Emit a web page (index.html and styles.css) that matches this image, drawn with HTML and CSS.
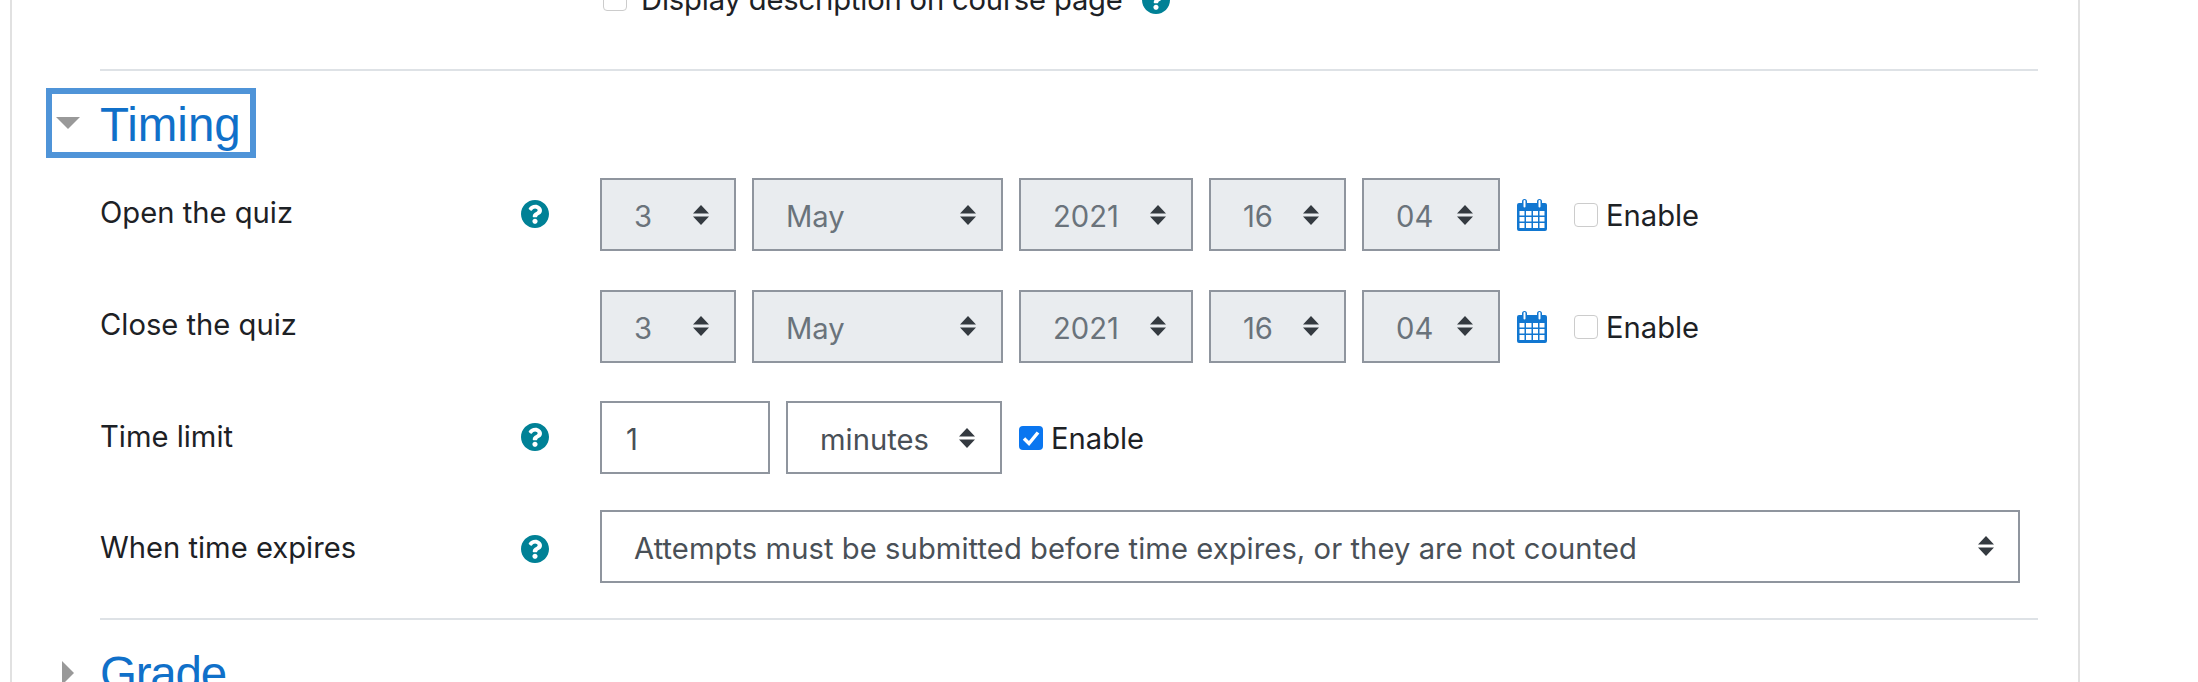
FILE: index.html
```html
<!DOCTYPE html>
<html lang="en">
<head>
    <meta charset="UTF-8">
    <title>Quiz settings</title>
    <link rel="stylesheet" href="styles.css">
</head>
<body>
    <svg class="icon-defs" width="0" height="0">
        <symbol id="help" viewBox="8 8 496 496">
            <path d="M504 256c0 136.997-111.043 248-248 248S8 392.997 8 256C8 119.083 119.043 8 256 8s248 111.083 248 248zM262.655 90c-54.497 0-89.255 22.957-116.549 63.758-3.536 5.286-2.353 12.415 2.715 16.258l34.699 26.31c5.205 3.947 12.621 3.008 16.665-2.122 17.864-22.658 30.113-35.797 57.303-35.797 20.429 0 45.698 13.148 45.698 32.958 0 14.976-12.363 22.667-32.534 33.976C247.128 238.528 216 254.941 216 296v4c0 6.627 5.373 12 12 12h56c6.627 0 12-5.373 12-12v-1.333c0-28.462 83.186-29.647 83.186-106.667 0-58.002-60.165-102-116.531-102zM256 338c-25.365 0-46 20.635-46 46 0 25.364 20.635 46 46 46s46-20.636 46-46c0-25.365-20.635-46-46-46z"/>
        </symbol>
        <symbol id="calendar" viewBox="0 0 30 33">
            <path fill-rule="evenodd" d="M5 3.5a2.5 2.5 0 0 1 5 0V5h10V3.500a2.500 2.500 0 0 1 5 0V5h3a2 2 0 0 1 2 2v24a2 2 0 0 1-2 2H2a2 2 0 0 1-2-2V7a2 2 0 0 1 2-2h3zM6.500 3v5.500a1 1 0 0 0 2 0V3a1 1 0 0 0-2 0zM21.500 3v5.500a1 1 0 0 0 2 0V3a1 1 0 0 0-2 0zM2.500 13v4.500h5V13zM9 13v4.500h5.500V13zM16 13v4.500h5V13zM22.500 13v4.500h5V13zM2.500 19v4.500h5V19zM9 19v4.500h5.500V19zM16 19v4.500h5V19zM22.500 19v4.500h5V19zM2.500 25v5h5v-5zM9 25v5h5.500v-5zM16 25v5h5v-5zM22.500 25v5h5v-5z"/>
        </symbol>
    </svg>

    <div class="card">
        <div class="top-row">
            <input type="checkbox" class="check">
            <span class="check-label">Display description on course page</span>
            <svg class="help help-inline"><use href="#help"/></svg>
        </div>

        <hr class="divider">

        <h3 class="section-title focused">
            <span class="caret caret-down"></span>
            <a href="#">Timing</a>
        </h3>

        <div class="form-row">
            <label>Open the quiz</label>
            <svg class="help"><use href="#help"/></svg>
            <div class="controls">
                <select class="sel w-day" disabled><option>3</option></select>
                <select class="sel w-month" disabled><option>May</option></select>
                <select class="sel w-year" disabled><option>2021</option></select>
                <select class="sel w-hour" disabled><option>16</option></select>
                <select class="sel w-min" disabled><option>04</option></select>
                <svg class="cal"><use href="#calendar"/></svg>
                <input type="checkbox" class="check check-date">
                <span class="check-label">Enable</span>
            </div>
        </div>

        <div class="form-row">
            <label>Close the quiz</label>
            <span class="help"></span>
            <div class="controls">
                <select class="sel w-day" disabled><option>3</option></select>
                <select class="sel w-month" disabled><option>May</option></select>
                <select class="sel w-year" disabled><option>2021</option></select>
                <select class="sel w-hour" disabled><option>16</option></select>
                <select class="sel w-min" disabled><option>04</option></select>
                <svg class="cal"><use href="#calendar"/></svg>
                <input type="checkbox" class="check check-date">
                <span class="check-label">Enable</span>
            </div>
        </div>

        <div class="form-row">
            <label class="label-low">Time limit</label>
            <svg class="help"><use href="#help"/></svg>
            <div class="controls">
                <input type="text" class="num" value="1">
                <select class="sel w-unit"><option>minutes</option></select>
                <input type="checkbox" class="check check-on" checked>
                <span class="check-label">Enable</span>
            </div>
        </div>

        <div class="form-row last">
            <label>When time expires</label>
            <svg class="help"><use href="#help"/></svg>
            <div class="controls">
                <select class="sel w-full"><option>Attempts must be submitted before time expires, or they are not counted</option></select>
            </div>
        </div>

        <hr class="divider">

        <h3 class="section-title">
            <span class="caret caret-right"></span>
            <a class="tight" href="#">Grade</a>
        </h3>
    </div>
</body>
</html>
```

FILE: styles.css
```css
html, body {
    margin: 0;
    height: 682px;
    overflow: hidden;
    background: #fff;
}

body {
    font-family: Inter, "Liberation Sans", sans-serif;
    font-size: 29.2px;
    color: #1d2125;
}

.icon-defs {
    display: block;
}

.card {
    margin: -13px 0 0 10px;
    padding: 0 40px 0 88px;
    box-sizing: border-box;
    width: 2070px;
    border-left: 2px solid #e1e1e1;
    border-right: 2px solid #e1e1e1;
}

.top-row {
    display: flex;
    align-items: center;
    height: 24px;
    padding-left: 503px;
    margin-bottom: 58px;
}

.divider {
    height: 2px;
    margin: 0 0 17px;
    border: none;
    background: #dee2e6;
}

.section-title {
    display: inline-flex;
    align-items: center;
    height: 70px;
    margin: 0 0 20px -54px;
    border: 6px solid transparent;
    box-sizing: border-box;
    padding: 3px 9px 0 4px;
    font-family: "Liberation Sans", sans-serif;
    font-size: 47.5px;
    font-weight: normal;
}

.section-title.focused {
    border-color: #4f94d8;
}

.section-title a {
    color: #1070c9;
    text-decoration: none;
}

.section-title a.tight {
    letter-spacing: -1.2px;
}

.caret {
    display: block;
    flex: none;
}

.caret-down {
    height: 0;
    border-left: 12px solid transparent;
    border-right: 12px solid transparent;
    border-top: 12px solid #999;
    width: 0;
    margin-right: 20px;
    margin-bottom: 3px;
}

.caret-right {
    width: 0;
    height: 0;
    border-top: 12px solid transparent;
    border-bottom: 12px solid transparent;
    border-left: 12px solid #999;
    margin: 0 26px 0 6px;
}

.form-row {
    display: grid;
    grid-template-columns: 421px 79px 1fr;
    min-height: 111.5px;
    padding-right: 18px;
}

.form-row.last {
    min-height: 105px;
}

.form-row label {
    padding-top: 19px;
    line-height: 32px;
}

.form-row .label-low {
    padding-top: 20px;
}

.help {
    display: block;
    width: 28px;
    height: 28px;
    margin-top: 22px;
    fill: #008196;
}

.help-inline {
    margin: 2px 0 0 19px;
}

.controls {
    display: flex;
    align-items: flex-start;
    gap: 16px;
}

.form-row.last .controls {
    margin-top: -3px;
}

.sel, .num {
    height: 73px;
    box-sizing: border-box;
    margin: 0;
    border: 2px solid #8f959e;
    border-radius: 0;
    font-family: inherit;
    font-size: 29.2px;
    color: #495057;
    background-color: #fff;
}

.sel {
    appearance: none;
    padding: 4px 50px 0 32px;
    background-image: url("data:image/svg+xml,%3Csvg xmlns='http://www.w3.org/2000/svg' width='16' height='20'%3E%3Cpath fill='%23343a40' d='M8 0l8 8.500H0zM8 20L0 11.500h16z'/%3E%3C/svg%3E");
    background-repeat: no-repeat;
    background-position: right 25px center;
    background-size: 16px 20px;
}

.sel:disabled {
    background-color: #e9ecef;
    color: #6a737b;
    opacity: 1;
}

.w-day { width: 136px; }
.w-month { width: 251px; }
.w-year { width: 174px; }
.w-hour { width: 137px; }
.w-min { width: 138px; }
.w-unit { width: 216px; }

.w-full {
    width: 1420px;
    letter-spacing: 0.06px;
    background-position: right 24px center;
}

.num {
    width: 170px;
    padding: 4px 24px 0;
}

.cal {
    width: 30px;
    height: 33px;
    margin: 20px 0 0 1px;
    fill: #1177d1;
}

.check {
    appearance: none;
    display: block;
    flex: none;
    width: 24px;
    height: 24px;
    margin: 0;
    border: 1px solid #ccc;
    border-radius: 4px;
    background: #fff;
}

.check-date {
    margin: 25px 0 0 11px;
}

.check-on {
    margin: 25px 0 0 1px;
    border: none;
    background-color: #0a76f0;
    background-image: url("data:image/svg+xml,%3Csvg xmlns='http://www.w3.org/2000/svg' viewBox='0 0 24 24'%3E%3Cpath fill='none' stroke='%23fff' stroke-width='3.500' d='M5 12.500l5 5 9-11'/%3E%3C/svg%3E");
}

.check-label {
    line-height: 32px;
}

.controls .check-label {
    margin: 22px 0 0 -8px;
}

.top-row .check-label {
    margin: 2px 0 0 14px;
    letter-spacing: -0.17px;
}
```
